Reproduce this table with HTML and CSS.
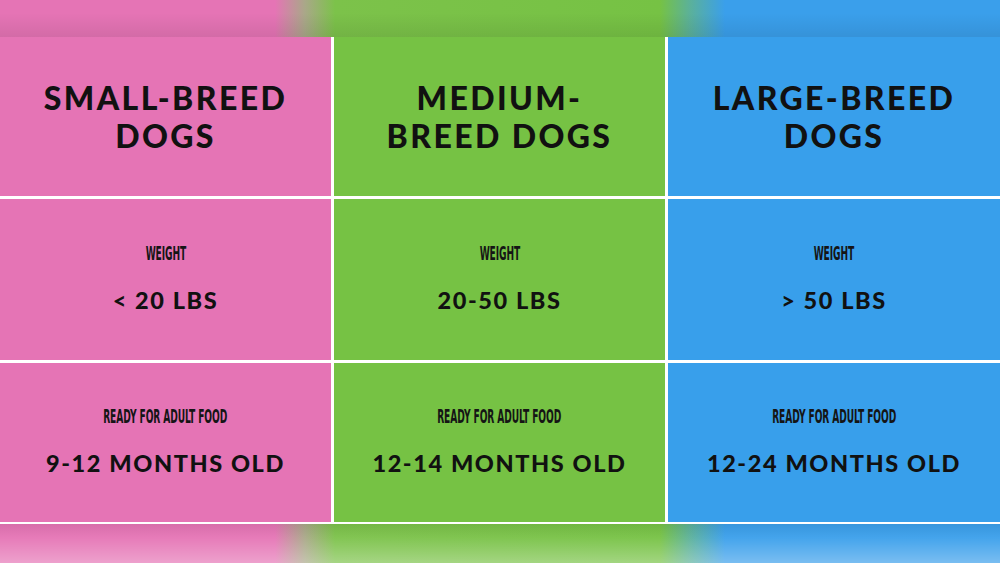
FILE: index.html
```html
<!DOCTYPE html>
<html>
<head>
<meta charset="utf-8">
<link rel="stylesheet" href="styles.css">
</head>
<body>
<div class="page">
  <div class="band band-top"></div>
  <div class="grid">
    <div class="cell pink head"><h2>SMALL-BREED<br>DOGS</h2></div>
    <div class="cell green head"><h2>MEDIUM-<br>BREED DOGS</h2></div>
    <div class="cell blue head"><h2>LARGE-BREED<br>DOGS</h2></div>

    <div class="cell pink info"><span class="label">WEIGHT</span><span class="value">&lt; 20 LBS</span></div>
    <div class="cell green info"><span class="label">WEIGHT</span><span class="value">20-50 LBS</span></div>
    <div class="cell blue info"><span class="label">WEIGHT</span><span class="value">&gt; 50 LBS</span></div>

    <div class="cell pink info"><span class="label">READY FOR ADULT FOOD</span><span class="value">9-12 MONTHS OLD</span></div>
    <div class="cell green info"><span class="label">READY FOR ADULT FOOD</span><span class="value">12-14 MONTHS OLD</span></div>
    <div class="cell blue info"><span class="label">READY FOR ADULT FOOD</span><span class="value">12-24 MONTHS OLD</span></div>
  </div>
  <div class="band band-bottom"></div>
</div>
</body>
</html>
```
FILE: styles.css
```css
html, body {
  margin: 0;
  padding: 0;
}
body {
  width: 1000px;
  height: 563px;
  overflow: hidden;
  background: #ffffff;
  font-family: "Lato", "Noto Sans", sans-serif;
  color: #141414;
}
.page {
  display: flex;
  flex-direction: column;
  width: 1000px;
  height: 563px;
}
.band {
  background: linear-gradient(90deg, #e574b5 0px, #e574b5 275px, #a9a888 305px, #7cc24a 335px, #76c244 660px, #5bb19a 690px, #3a9feb 725px, #3a9feb 1000px);
  position: relative;
}
.band-top {
  height: 37px;
}
.band-top::after {
  content: "";
  position: absolute;
  inset: 0;
  background: linear-gradient(180deg, rgba(0,0,0,0) 35%, rgba(0,0,0,0.08) 100%);
}
.band-bottom {
  height: 39px;
  margin-top: 2px;
}
.band-bottom::after {
  content: "";
  position: absolute;
  inset: 0;
  background: linear-gradient(180deg, rgba(0,0,0,0.06) 0%, rgba(255,255,255,0.05) 35%, rgba(255,255,255,0.32) 100%);
}
.grid {
  display: grid;
  grid-template-columns: 331px 331px 332px;
  grid-template-rows: 159px 161px 159px;
  gap: 3px;
  background: #ffffff;
}
.cell {
  display: flex;
  flex-direction: column;
  align-items: center;
  justify-content: center;
  text-align: center;
}
.pink { background: #e574b5; }
.green { background: #76c244; }
.blue { background: #389feb; }
.head h2 {
  margin: 0;
  font-family: "Lato", sans-serif;
  font-weight: 900;
  font-size: 32px;
  line-height: 38px;
  letter-spacing: 2.4px;
  color: #111111;
}
.info {
  gap: 22px;
  padding-bottom: 2px;
}
.label {
  font-family: "Liberation Sans Narrow", "DejaVu Sans Condensed", sans-serif;
  font-weight: 700;
  font-size: 19.5px;
  line-height: 20px;
  color: #151515;
  display: inline-block;
  transform: scaleX(0.52);
  letter-spacing: -0.2px;
}
.value {
  font-family: "Lato", sans-serif;
  font-weight: 900;
  font-size: 23.5px;
  line-height: 28px;
  letter-spacing: 1.6px;
  color: #111111;
}
```
